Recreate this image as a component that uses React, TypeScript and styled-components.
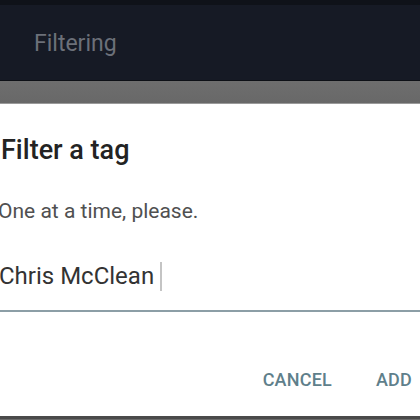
import React from "react";
import styled, { createGlobalStyle } from "styled-components";

const Global = createGlobalStyle`
  html, body { margin: 0; padding: 0; background: #6b6b6b; }
  body { font-family: Roboto, "Noto Sans", "Liberation Sans", sans-serif; }
  * { box-sizing: border-box; }
`;

const Page = styled.div`
  width: 420px;
  height: 420px;
  display: flex;
  flex-direction: column;
  overflow: hidden;
  background: #6b6b6b;
`;

const AppBar = styled.header`
  height: 81px;
  flex: none;
  display: flex;
  align-items: center;
  padding-left: 34px;
  background: #161a25;
  border-top: 5px solid #0f1219;
  border-bottom: 1px solid #0d1016;
`;

const AppTitle = styled.span`
  font-size: 23px;
  line-height: 26px;
  color: #6c7079;
  margin-top: 2px;
`;

const Scrim = styled.div`
  height: 23px;
  flex: none;
  background: linear-gradient(#6e6e6e, #686868);
  border-bottom: 1px solid #9a9a9a;
`;

const Dialog = styled.section`
  flex: none;
  height: 312px;
  background: #ffffff;
  display: flex;
  flex-direction: column;
  padding: 30px 0 0 0;
`;

const Title = styled.h2`
  margin: 0 0 0 1px;
  font-size: 27px;
  line-height: 32px;
  font-weight: 500;
  color: #232323;
`;

const Message = styled.p`
  margin: 32px 0 0 -2px;
  font-size: 21px;
  line-height: 26px;
  color: #505050;
`;

const Field = styled.div`
  margin-top: 37px;
  padding-bottom: 19px;
  border-bottom: 2px solid #8c9ea6;
  display: flex;
  align-items: center;
`;

const FieldText = styled.span`
  font-size: 24px;
  line-height: 30px;
  color: #333333;
  margin-left: -1px;
`;

const Caret = styled.span`
  width: 2px;
  height: 29px;
  margin-left: 6px;
  background: #c4c4c4;
`;

const Actions = styled.div`
  margin-top: 58px;
  display: flex;
  justify-content: flex-end;
  gap: 28px;
`;

const ActionButton = styled.button`
  border: none;
  background: transparent;
  padding: 0 8px;
  font-family: inherit;
  font-size: 18px;
  line-height: 20px;
  font-weight: 500;
  color: #5f7f8b;
  letter-spacing: 0.2px;
`;

const BottomEdge = styled.div`
  flex: none;
  height: 3px;
  background: #4a4a4a;
`;

export default function App() {
  return (
    <Page>
      <Global />
      <AppBar>
        <AppTitle>Filtering</AppTitle>
      </AppBar>
      <Scrim />
      <Dialog>
        <Title>Filter a tag</Title>
        <Message>One at a time, please.</Message>
        <Field>
          <FieldText>Chris McClean</FieldText>
          <Caret />
        </Field>
        <Actions>
          <ActionButton>CANCEL</ActionButton>
          <ActionButton>ADD</ActionButton>
        </Actions>
      </Dialog>
      <BottomEdge />
    </Page>
  );
}
